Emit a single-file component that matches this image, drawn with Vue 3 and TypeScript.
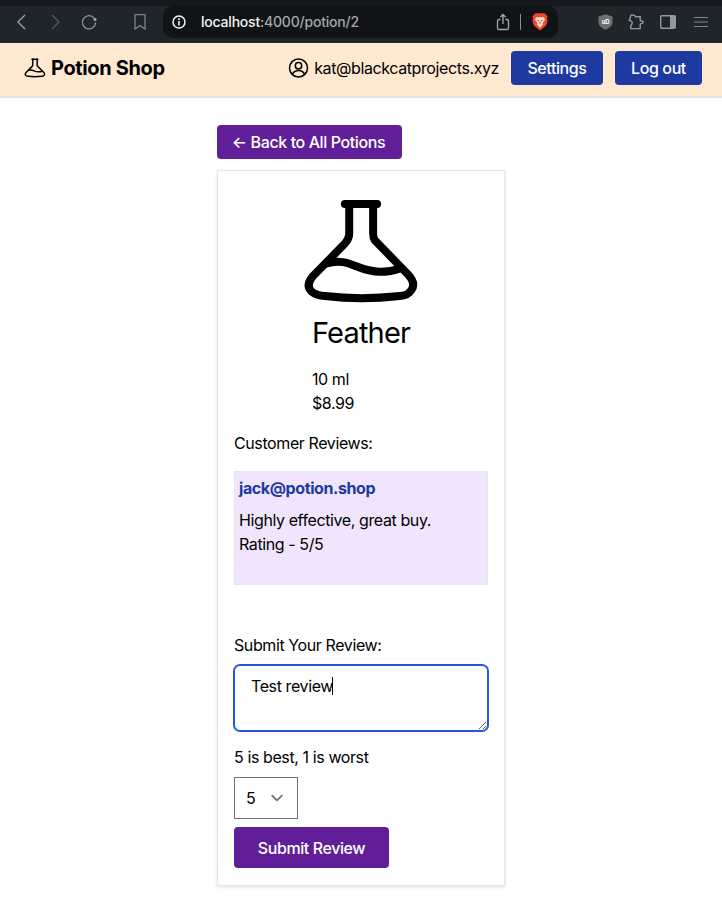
<template>
  <div class="page">
    <!-- Browser toolbar -->
    <div class="toolbar">
      <div class="nav-icons">
        <svg class="ic" width="14" height="16" viewBox="0 0 14 16"><path d="M11 1 L4 8 L11 15" stroke="#9aa3ab" stroke-width="1.3" /></svg>
        <svg class="ic forward" width="14" height="16" viewBox="0 0 14 16"><path d="M4 1 L11 8 L4 15" stroke="#565d63" stroke-width="1.3" /></svg>
        <svg class="ic reload" width="18" height="18" viewBox="0 0 18 18">
          <path d="M14 5 A6.6 6.6 0 1 0 15.6 9.5" stroke="#8d979e" stroke-width="1.3" />
          <circle cx="15" cy="6.4" r="1.6" fill="#9aa3ab" />
        </svg>
        <svg class="ic bookmark" width="14" height="16" viewBox="0 0 14 16"><path d="M2 1 Q2 .7 2.5 .7 H11.5 Q12 .7 12 1 V15 L7 11.5 L2 15 Z" stroke="#7d868d" stroke-width="1.3" /></svg>
      </div>
      <div class="url-pill">
        <svg class="ic" width="14" height="14" viewBox="0 0 14 14">
          <circle cx="7" cy="7" r="6" stroke="#f2f3f4" stroke-width="1.5" />
          <path d="M7 6 V10.4" stroke="#f2f3f4" stroke-width="1.6" />
          <circle cx="7" cy="3.9" r="1" fill="#f2f3f4" />
        </svg>
        <span class="url"><span class="host">localhost</span>:4000/potion/2</span>
        <svg class="ic share" width="14" height="18" viewBox="0 0 14 18">
          <path d="M4.5 6.5 H3 Q1.5 6.5 1.5 8 V15 Q1.5 16.5 3 16.5 H11 Q12.5 16.5 12.5 15 V8 Q12.5 6.5 11 6.5 H9.5 M7 11 V1.5 M4.5 4 L7 1.5 L9.5 4" stroke="#a4a9ad" stroke-width="1.3" />
        </svg>
        <span class="pill-divider"></span>
        <svg class="ic" width="16" height="18" viewBox="0 0 16 18">
          <path d="M3.6 .3 H12.4 L14 1.8 L15.6 3.6 L15 5.5 L15.6 8 L14 12.6 L8 17.6 L2 12.6 L.4 8 L1 5.5 L.4 3.6 L2 1.8 Z" fill="#f0492a" />
          <path d="M4.2 4.2 H11.8 L13 6.4 L10.6 10 L11 11.6 L8 14.8 L5 11.6 L5.4 10 L3 6.4 Z" fill="#ffe3da" />
          <path d="M5.5 7 L7 8.2 M10.5 7 L9 8.2 M8 8.5 V11" stroke="#f0492a" stroke-width="1.1" />
        </svg>
      </div>
      <div class="ext-icons">
        <svg class="ic" width="15" height="16" viewBox="0 0 15 16">
          <path d="M7.5 .3 L14.5 2.4 V9 Q14 13 7.5 15.7 Q1 13 .5 9 V2.4 Z" fill="#6d7072" />
          <text x="7.5" y="9.6" class="ub">uD</text>
        </svg>
        <svg class="ic puzzle" width="16" height="16" viewBox="0 0 16 16">
          <path d="M3 1.2 H5.5 Q7 1.2 7 2 Q7 2.8 8.5 2.8 H12.2 V6.2 Q12.2 7 13.8 7 Q15.3 7.4 15.3 8.2 Q15.3 9 13.8 9.4 Q12.2 9.6 12.2 10.4 V14.6 H2.8 V11.4 Q4.2 10.6 4.2 8.8 Q4.2 6.8 1.2 6.4 Z" stroke="#8d9aa1" stroke-width="1.4" />
        </svg>
        <svg class="ic panel" width="16" height="14" viewBox="0 0 16 14">
          <rect x=".7" y=".7" width="14.6" height="12.6" rx="1.2" stroke="#8d9aa1" stroke-width="1.4" />
          <rect x="10" y="1" width="5.5" height="12" fill="#8d9aa1" />
        </svg>
        <svg class="ic menu" width="14" height="12" viewBox="0 0 14 12"><path d="M0 1.5 H14 M0 6 H14 M0 10.5 H14" stroke="#7d868d" stroke-width="1.2" /></svg>
      </div>
    </div>

    <!-- App header -->
    <header class="app-header">
      <div class="brand">
        <svg class="ic" width="22" height="20" viewBox="0 0 350 325">
          <path v-for="d in flaskPaths" :key="d" :d="d" class="flask-line" />
        </svg>
        <span>Potion Shop</span>
      </div>
      <div class="account">
        <svg class="ic user-icon" width="21" height="20" viewBox="0 0 21 20">
          <circle cx="10.5" cy="10" r="9" stroke="#000" stroke-width="1.5" />
          <circle cx="10.5" cy="7.8" r="3.2" stroke="#000" stroke-width="1.5" />
          <path d="M4.5 16 Q6.5 12.6 10.5 12.6 Q14.5 12.6 16.5 16" stroke="#000" stroke-width="1.5" />
        </svg>
        <span class="email">{{ email }}</span>
        <button class="btn btn-blue settings">Settings</button>
        <button class="btn btn-blue logout">Log out</button>
      </div>
    </header>

    <main class="content">
      <button class="btn btn-purple back">← Back to All Potions</button>

      <section class="card">
        <svg class="flask" width="117" height="108" viewBox="0 0 350 325">
          <path v-for="d in flaskPaths" :key="d" :d="d" class="flask-line" />
        </svg>

        <div class="details">
          <h1 class="title">{{ potion.name }}</h1>
          <p>{{ potion.size }}</p>
          <p>{{ potion.price }}</p>
        </div>

        <p class="reviews-label">Customer Reviews:</p>
        <div v-for="r in reviews" :key="r.author" class="review">
          <p class="author">{{ r.author }}</p>
          <p class="body">{{ r.text }}</p>
          <p>Rating - {{ r.rating }}/5</p>
        </div>

        <label class="submit-label" for="review-text">Submit Your Review:</label>
        <div class="text-wrap">
          <textarea id="review-text" v-model="draft" class="review-input"></textarea>
          <span class="caret"></span>
        </div>

        <label class="rating-label" for="rating">5 is best, 1 is worst</label>
        <div class="select-wrap">
          <select id="rating" v-model="rating" class="rating-select">
            <option v-for="n in [5, 4, 3, 2, 1]" :key="n" :value="n">{{ n }}</option>
          </select>
          <svg class="chevron" width="24" height="24" viewBox="0 0 20 20">
            <path d="M6 8 L10 12 L14 8" fill="none" stroke="#6b7280" stroke-width="1.5" stroke-linecap="round" stroke-linejoin="round" />
          </svg>
        </div>
        <button class="btn btn-purple submit">Submit Review</button>
      </section>
    </main>
  </div>
</template>

<script setup lang="ts">
  import { ref } from 'vue';

  const email = 'kat@blackcatprojects.xyz';

  const potion = { name: 'Feather', size: '10 ml', price: '$8.99' };

  const reviews = [{ author: 'jack@potion.shop', text: 'Highly effective, great buy.', rating: 5 }];

  // same flask drawing for the logo and the potion picture
  const flaskPaths = [
    'M125 21 H222',
    'M138 21 V110 Q138 127 125 140 L30 237 Q5 265 25 285 Q40 297 65 298 Q173 311 290 298 Q315 297 325 280 Q340 260 315 233 L215 130 Q210 123 210 110 V21',
    'M70 200 C140 180 160 225 230 225 C250 225 270 223 290 215',
  ];

  const draft = ref('Test review');
  const rating = ref(5);
</script>

<style>
  html,
  body {
    margin: 0;
    background: #fff;
  }
</style>

<style scoped>
  .page {
    font-family: Inter, 'Liberation Sans', sans-serif;
    font-size: 16px;
    line-height: 24px;
    letter-spacing: -0.025em;
    color: #000;
  }

  p,
  h1 {
    margin: 0;
    font-weight: 400;
  }

  .ic {
    display: block;
    flex: none;
    fill: none;
    stroke-width: 1.5;
  }

  .flask-line {
    fill: none;
    stroke: #000;
    stroke-width: 24;
    stroke-linecap: round;
    stroke-linejoin: round;
  }

  /* Browser toolbar */
  .toolbar {
    height: 43px;
    box-sizing: border-box;
    display: flex;
    align-items: flex-start;
    background: #202529;
    border-top: 6px solid #15181c;
  }

  .nav-icons {
    width: 163px;
    height: 32px;
    box-sizing: border-box;
    display: flex;
    align-items: center;
    padding-left: 14px;
  }

  .forward {
    margin-left: 20px;
  }

  .reload {
    margin-left: 18px;
  }

  .bookmark {
    margin-left: 35px;
  }

  .url-pill {
    width: 395px;
    height: 32px;
    box-sizing: border-box;
    display: flex;
    align-items: center;
    padding: 0 10px 0 9px;
    background: #111316;
    border-radius: 10px;
  }

  .url {
    margin-left: 15px;
    flex: 1;
    font-size: 14px;
    font-weight: 500;
    letter-spacing: -0.015em;
    color: #a4a9ad;
  }

  .host {
    color: #f2f3f4;
  }

  .pill-divider {
    width: 1px;
    height: 16px;
    margin: 0 11px 0 10px;
    background: #8a8f93;
  }

  .ext-icons {
    flex: 1;
    height: 32px;
    display: flex;
    align-items: center;
    padding-left: 40px;
  }

  .puzzle {
    margin-left: 15px;
  }

  .panel {
    margin-left: 16px;
  }

  .menu {
    margin-left: 18px;
  }

  .ub {
    font-size: 6px;
    font-weight: 700;
    fill: #fff;
    stroke: none;
    text-anchor: middle;
  }

  /* App header */
  .app-header {
    height: 55px;
    box-sizing: border-box;
    display: flex;
    align-items: center;
    justify-content: space-between;
    padding: 0 20px 3px 24px;
    background: #fee8cf;
    border-bottom: 2px solid #e2e4e8;
  }

  .brand {
    display: flex;
    align-items: center;
    gap: 5px;
    font-size: 20px;
    font-weight: 700;
    letter-spacing: -0.018em;
  }

  .account {
    display: flex;
    align-items: center;
  }

  .email {
    margin-left: 5px;
  }

  .btn {
    border: none;
    border-radius: 4px;
    font-family: inherit;
    font-size: 16px;
    font-weight: 500;
    line-height: 24px;
    letter-spacing: inherit;
    color: #fff;
    cursor: pointer;
  }

  .btn-blue {
    height: 34px;
    padding: 0;
    background: #1e3aa0;
  }

  .settings {
    width: 92px;
    margin: 0 12px;
  }

  .logout {
    width: 87px;
  }

  .btn-purple {
    background: #601f98;
  }

  .content {
    width: 288px;
    margin: 0 auto;
    padding: 27px 0 19px;
  }

  .back {
    display: block;
    width: 185px;
    height: 34px;
    padding: 0 2px 0 0;
    margin-bottom: 11px;
  }

  /* Potion card */
  .card {
    box-sizing: border-box;
    height: 716px;
    display: flex;
    flex-direction: column;
    padding: 26px 16px 0;
    background: #fff;
    border: 1px solid #e5e7eb;
    box-shadow: 0 1px 3px rgba(0, 0, 0, 0.12);
  }

  .flask {
    display: block;
    align-self: center;
  }

  .details {
    align-self: center;
    margin-top: 10px;
  }

  .title {
    font-size: 29px;
    line-height: 36px;
    letter-spacing: -0.028em;
    margin-bottom: 16px;
  }

  .reviews-label {
    margin-top: 16px;
  }

  .review {
    box-sizing: border-box;
    height: 114px;
    margin-top: 16px;
    padding: 4px;
    background: #f1e4fd;
    border: 1px solid #e5e7eb;
  }

  .author {
    font-weight: 700;
    color: #1e3aa0;
    margin-bottom: 8px;
  }

  .submit-label {
    display: block;
    margin-top: 48px;
  }

  .text-wrap {
    position: relative;
    margin-top: 8px;
  }

  .review-input {
    display: block;
    width: 100%;
    height: 66px;
    box-sizing: border-box;
    padding: 8px 16px;
    border: 1px solid #2558e0;
    box-shadow: 0 0 0 1px #2558e0;
    border-radius: 6px;
    outline: none;
    font-family: inherit;
    font-size: 16px;
    line-height: 24px;
    letter-spacing: inherit;
    color: #000;
    caret-color: transparent;
  }

  .caret {
    position: absolute;
    left: 98px;
    top: 12px;
    width: 1px;
    height: 18px;
    background: #000;
  }

  .rating-label {
    display: block;
    margin-top: 14px;
  }

  .select-wrap {
    position: relative;
    width: 64px;
    margin-top: 8px;
  }

  .rating-select {
    display: block;
    width: 64px;
    height: 42px;
    box-sizing: border-box;
    padding: 0 11px;
    appearance: none;
    background: #fff;
    border: 1px solid #6b7280;
    border-radius: 0;
    font-family: inherit;
    font-size: 16px;
    color: #000;
  }

  .chevron {
    position: absolute;
    right: 9px;
    top: 9px;
    pointer-events: none;
  }

  .submit {
    align-self: flex-start;
    width: 155px;
    height: 41px;
    margin: 8px 0 0;
    padding: 0;
  }
</style>
